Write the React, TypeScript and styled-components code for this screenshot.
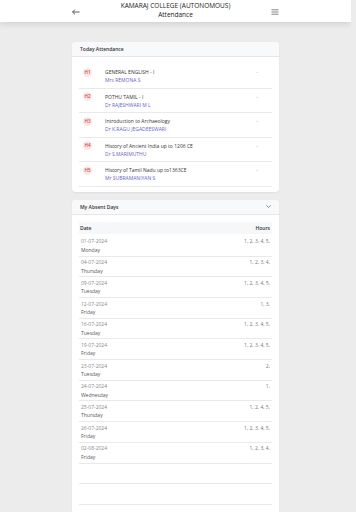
import styled, { createGlobalStyle } from 'styled-components'

const todayClasses = [
	{ hour: 'H1', subject: 'GENERAL ENGLISH - I', staff: 'Mrs REMONA S' },
	{ hour: 'H2', subject: 'POTHU TAMIL - I', staff: 'Dr RAJESHWARI M L' },
	{ hour: 'H3', subject: 'Introduction to Archaeology', staff: 'Dr K.RAGU JEGADEESWARI' },
	{ hour: 'H4', subject: 'History of Ancient India up to 1206 CE', staff: 'Dr S.MARIMUTHU' },
	{ hour: 'H5', subject: 'History of Tamil Nadu up to1363CE', staff: 'Mr SUBRAMANIYAN S' },
]

const absentDays = [
	{ date: '01-07-2024', day: 'Monday', hours: '1, 2, 3, 4, 5,' },
	{ date: '04-07-2024', day: 'Thursday', hours: '1, 2, 3, 4,' },
	{ date: '09-07-2024', day: 'Tuesday', hours: '1, 2, 3, 4, 5,' },
	{ date: '12-07-2024', day: 'Friday', hours: '1, 3,' },
	{ date: '16-07-2024', day: 'Tuesday', hours: '1, 2, 3, 4, 5,' },
	{ date: '19-07-2024', day: 'Friday', hours: '1, 2, 3, 4, 5,' },
	{ date: '23-07-2024', day: 'Tuesday', hours: '2,' },
	{ date: '24-07-2024', day: 'Wednesday', hours: '1,' },
	{ date: '25-07-2024', day: 'Thursday', hours: '1, 2, 4, 5,' },
	{ date: '26-07-2024', day: 'Friday', hours: '1, 2, 3, 4, 5,' },
	{ date: '02-08-2024', day: 'Friday', hours: '1, 2, 3, 4,' },
]

// blank rows the table keeps under the data
const emptyRows = Array.from({ length: 18 }, (_, i) => i)

export default function App(): JSX.Element {
	return (
		<>
			<GlobalStyle />
			<TopBar>
				<TopBarInner>
					<IconButton aria-label="back">
						<svg width="8" height="6" viewBox="0 0 8 6" fill="none" stroke="#333" strokeWidth="0.8">
							<path d="M7.6 3H0.6M3 0.6L0.6 3L3 5.4" />
						</svg>
					</IconButton>
					<Title>
						<div>KAMARAJ COLLEGE (AUTONOMOUS)</div>
						<div>Attendance</div>
					</Title>
					<IconButton aria-label="menu">
						<svg width="8" height="6" viewBox="0 0 8 6" fill="none" stroke="#555" strokeWidth="0.7">
							<path d="M0.5 0.8H7.5M0.5 3H7.5M0.5 5.2H7.5" />
						</svg>
					</IconButton>
				</TopBarInner>
			</TopBar>

			<Main>
				<Card>
					<CardHeader>Today Attendance</CardHeader>
					<CourseList>
						{todayClasses.map((c) => (
							<CourseRow key={c.hour}>
								<Badge>{c.hour}</Badge>
								<CourseInfo>
									<Subject>{c.subject}</Subject>
									<Staff>{c.staff}</Staff>
								</CourseInfo>
								<Status>-</Status>
							</CourseRow>
						))}
					</CourseList>
				</Card>

				<Card>
					<CardHeader>
						My Absent Days
						<svg width="5" height="3" viewBox="0 0 5 3" fill="none" stroke="#444" strokeWidth="0.6">
							<path d="M0.4 0.4L2.5 2.5L4.6 0.4" />
						</svg>
					</CardHeader>
					<TableWrap>
						<TableHead>
							<span>Date</span>
							<span>Hours</span>
						</TableHead>
						{absentDays.map((d) => (
							<DayRow key={d.date}>
								<div>
									<DateText>{d.date}</DateText>
									<DayText>{d.day}</DayText>
								</div>
								<Hours>{d.hours}</Hours>
							</DayRow>
						))}
						{emptyRows.map((i) => (
							<DayRow key={'empty' + i} />
						))}
					</TableWrap>
				</Card>
			</Main>
		</>
	)
}

const GlobalStyle = createGlobalStyle`
	html {
		background: #ececec;
	}
	body {
		margin: 0 5px 0 0;
		padding: 0;
		background: #ececec;
		font-family: "Open Sans", "Noto Sans", sans-serif;
	}
	::-webkit-scrollbar {
		width: 5px;
	}
	::-webkit-scrollbar-track {
		background: #f1f1f1;
	}
	::-webkit-scrollbar-thumb {
		background: #d4d4d4;
	}
`
const TopBar = styled.header`
	height: 22px;
	background: #fff;
	box-shadow: 0 2px 6px rgba(0, 0, 0, 0.12);
`
const TopBarInner = styled.div`
	width: 207px;
	height: 100%;
	margin: 0 auto;
	display: flex;
	justify-content: space-between;
	align-items: center;
`
const IconButton = styled.div`
	display: flex;
	align-items: center;
	justify-content: center;
	width: 8px;
	height: 8px;
	margin-top: 1px;
`
const Title = styled.div`
	text-align: center;
	font-size: 6.5px;
	line-height: 8.5px;
	color: #222;
	margin-top: -1px;
`
const Main = styled.main`
	width: 207px;
	margin: 20px auto 0;
	display: flex;
	flex-direction: column;
	gap: 8px;
`
const Card = styled.section`
	background: #fff;
	border-radius: 4px;
	box-shadow: 0 1px 2px rgba(0, 0, 0, 0.06);
	overflow: hidden;
`
const CardHeader = styled.div`
	height: 14px;
	line-height: 14px;
	padding: 0 8px;
	background: #f8f9fa;
	border-bottom: 1px solid #e7e7e7;
	display: flex;
	justify-content: space-between;
	align-items: center;
	font-size: 5px;
	font-weight: 600;
	color: #333;
`
const CourseList = styled.div`
	padding: 7px 7px 5px;
`
const CourseRow = styled.div`
	display: flex;
	align-items: flex-start;
	padding: 4px 0 3.6px 4px;
	border-bottom: 1px solid #e9e9e9;
`
const Badge = styled.div`
	width: 9px;
	height: 9px;
	margin-top: -0.5px;
	border-radius: 50%;
	background: #fde8e8;
	color: #e53935;
	font-size: 4.6px;
	font-weight: 600;
	line-height: 9px;
	text-align: center;
	flex-shrink: 0;
`
const CourseInfo = styled.div`
	flex: 1;
	margin-left: 13px;
	font-size: 5px;
	line-height: 8px;
`
const Subject = styled.div`
	color: #333;
`
const Staff = styled.div`
	color: #5f63d6;
`
const Status = styled.div`
	width: 30px;
	text-align: center;
	font-size: 5px;
	line-height: 8px;
	color: #999;
`
const TableWrap = styled.div`
	padding: 7px 7px 0;
`
const TableHead = styled.div`
	height: 12px;
	line-height: 12px;
	padding: 0 2px 0 1px;
	margin-bottom: 2px;
	background: #f5f7f9;
	display: flex;
	justify-content: space-between;
	font-size: 5px;
	font-weight: 600;
	color: #333;
`
const DayRow = styled.div`
	box-sizing: border-box;
	height: 20.7px;
	padding: 1.5px 2px 0;
	border-bottom: 1px solid #e9e9e9;
	display: flex;
	justify-content: space-between;
	align-items: flex-start;
	font-size: 5px;
	line-height: 8.4px;
`
const DateText = styled.div`
	color: #888;
`
const DayText = styled.div`
	color: #555;
`
const Hours = styled.div`
	color: #777;
`
